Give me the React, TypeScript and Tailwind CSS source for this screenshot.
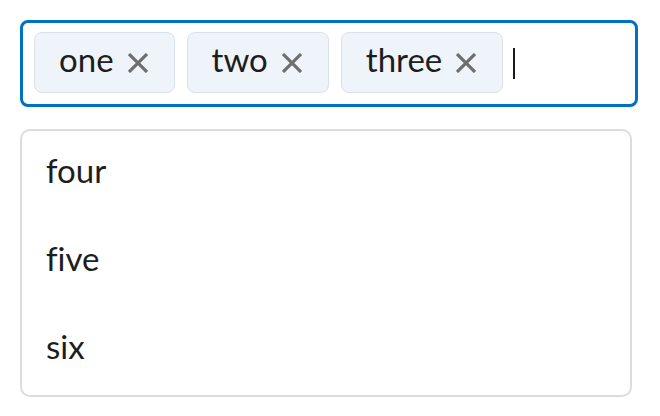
import React from "react"

const tags = ["one", "two", "three"]
const options = ["four", "five", "six"]

function CloseIcon() {
  return (
    <svg width="20" height="20" viewBox="0 0 20 20" className="mt-[6px] shrink-0">
      <path d="M1 1 L19 19 M19 1 L1 19" stroke="#6e6e6e" strokeWidth="3.2" fill="none" />
    </svg>
  )
}

export default function App() {
  return (
    <div
      className="h-[416px] w-[660px] bg-white pt-5 pl-5 text-[33px] text-[#1d1d1d] [font-variant-ligatures:none]"
      style={{ fontFamily: "Lato, 'Open Sans', sans-serif" }}
    >
      {/* input with chips */}
      <div className="flex h-[87px] w-[618px] items-start gap-3 rounded-[8px] border-[3px] border-[#0070c0] pt-[9px] pl-[11px]">
        {tags.map(tag => (
          <div
            key={tag}
            className="flex h-[61px] items-center gap-[14px] rounded-[8px] border border-[#dae1eb] bg-[#eff3fa] pr-[26px] pb-[6px] pl-[24px]"
          >
            <span>{tag}</span>
            <CloseIcon />
          </div>
        ))}
        <div className="mt-[16px] -ml-[2px] h-[31px] w-[2px] bg-[#1a1a1a]" />
      </div>

      {/* dropdown list */}
      <div className="mt-[22px] w-[612px] rounded-[10px] border-2 border-[#dcdcdc]">
        {options.map(opt => (
          <div key={opt} className="flex h-[88px] items-center px-6 pb-2">
            {opt}
          </div>
        ))}
      </div>
    </div>
  )
}
